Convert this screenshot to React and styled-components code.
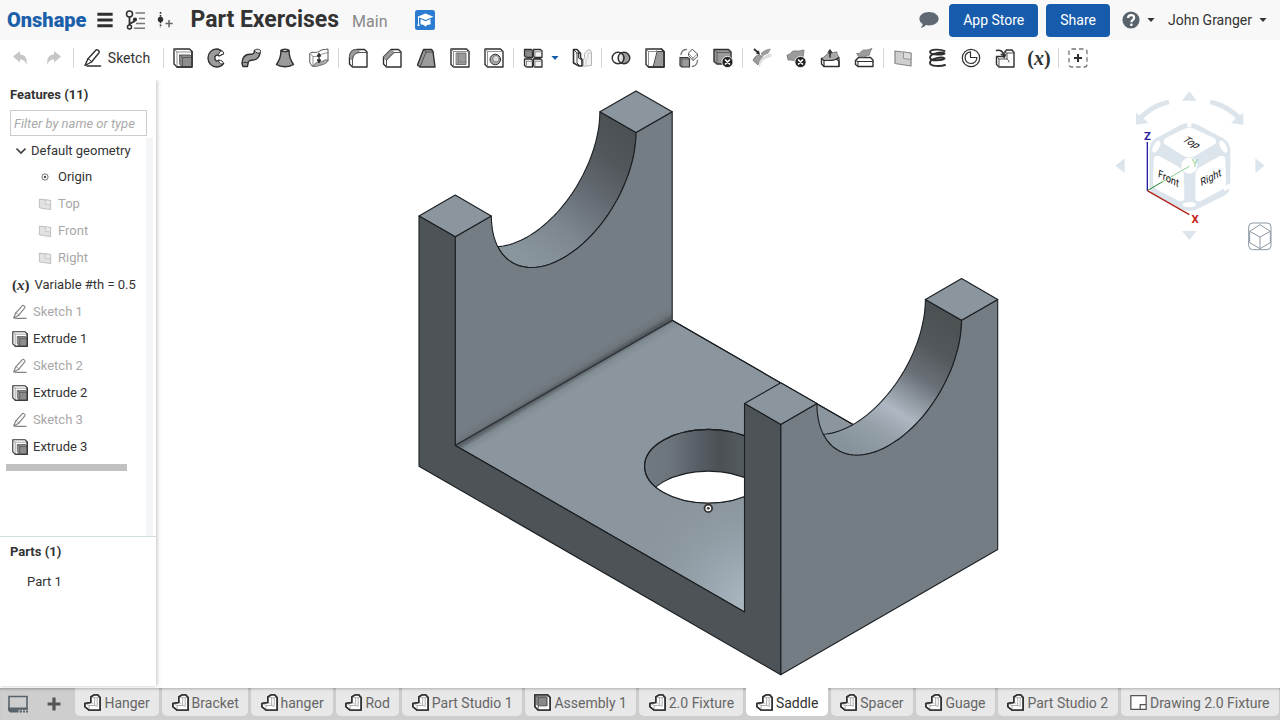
import React, { useState } from 'react';
import styled, { createGlobalStyle, css } from 'styled-components';

const GlobalStyle = createGlobalStyle`
  * {
    box-sizing: border-box;
  }

  body {
    margin: 0;
    font-family: Roboto, 'Liberation Sans', sans-serif;
    font-size: 14px;
    line-height: 18px;
    color: #333;
    background: #fff;
  }

  button,
  input {
    font: inherit;
    color: inherit;
  }

  button {
    border: none;
    background: none;
    padding: 0;
    cursor: pointer;
  }

  svg {
    display: block;
    flex: none;
  }
`;

/* ---------- icons ---------- */

const INK = '#2f2f2f';
const GREY = '#9b9b9b';

const outlined = {
  fill: 'none',
  stroke: INK,
  strokeWidth: 1.4,
  strokeLinejoin: 'round',
  strokeLinecap: 'round',
};

const thin = { stroke: '#777', strokeWidth: 0.8, fill: 'none' };

const ErrorBadge = () => (
  <g>
    <circle cx="14.5" cy="14" r="5.6" fill="#222" stroke="#fff" strokeWidth="0.8" />
    <path d="M12.5 12l4 4M16.5 12l-4 4" stroke="#fff" strokeWidth="1.7" strokeLinecap="round" />
  </g>
);

const icons = {
  undo: <path d="M3 8.500L10 3v3.500c5 0 7.500 3.500 6.500 10.500-1.200-4.200-3-5.500-6.500-5.500V14.500z" fill="#c6c6c6" />,
  redo: <path d="M17 8.500L10 3v3.500c-5 0-7.500 3.500-6.500 10.500 1.200-4.200 3-5.500 6.500-5.500V14.500z" fill="#c6c6c6" />,
  pencil: (
    <g {...outlined}>
      <path d="M2 17.500l2.800-6.500L13 2c1-1 4 1 3.200 2.500L8.500 14 2 17.500z" />
      <path d="M4.800 11c1.500.2 3 1.400 3.700 3" strokeWidth="1" />
      <path d="M4 18h13.500" strokeWidth="1.600" />
    </g>
  ),
  extrude: (
    <g {...outlined}>
      <path d="M1 1h15.500l2.500 2.500V19H4l-3-3z" fill="#fff" />
      <path d="M1 1l3 3v15M4 4h15" {...thin} />
      <path d="M7 7h10l2 2v10H9.500L7 16.500z" fill="#8d8d8d" stroke="#555" strokeWidth="1" />
      <path d="M7 7l2.500 2.500V19M9.500 9.500H19" stroke="#555" strokeWidth=".9" />
      <path d="M19 3.500V19H4" />
    </g>
  ),
  revolve: (
    <g {...outlined}>
      <path d="M16.500 5.500C14.500 2.500 12 1 9.500 1A8.500 9 0 0 0 9.500 19c3 0 5.500-1.300 7-3.500l-4.700-3.300c-2 1.500-4 .3-4-2.200s2.200-3.700 4-2.200z" fill={GREY} />
      <path d="M16.500 5.500c.6-2.700-2.500-3.300-3.700-1.300-1 1.800-2 2.600-1 3.600zM16.500 15.500c0-2-2.400-3.600-4.700-3.300-.4 2.800 2.200 4.800 4.700 3.300z" fill="#fff" strokeWidth="1" />
    </g>
  ),
  sweep: (
    <g {...outlined}>
      <path d="M13.500 2.500c-.3 3-1 3.800-4.500 3.800C4 6.300 1.200 9.500 1 15.500L2 18.500h4.500L7 15.500c.3-2.600 1-3.300 4-3.300 5.500 0 7.800-3.700 8.500-9.200z" fill={GREY} />
      <path d="M13.500 2.500c1-2 5-1.500 6 0s-.5 3-3 2.500-3-2.500-3-2.500z" fill="#ddd" strokeWidth="1" />
      <path d="M1.500 15c1.500-1 4-1 5.500 0" strokeWidth="1" />
    </g>
  ),
  loft: (
    <g {...outlined}>
      <path d="M6 2.500C6 9 4 13 1.500 16.500c4 3 13 3 17 0C16 13 14 9 14 2.500z" fill={GREY} />
      <path d="M6 2.500c1-1.700 7-1.700 8 0-1 1.500-7 1.500-8 0z" fill="#fff" />
    </g>
  ),
  thicken: (
    <g {...outlined} strokeWidth="1">
      <path d="M1 5.500c3-3 5 .5 9-2 3-2.500 5-1.500 9-2.500v12c-3 1-4 4-8 4s-5 2-8 1l-2-3z" fill="#fff" stroke="#555" />
      <path d="M4 18c2-3 4-4 7-4s4-3 8-2c-1 4-4 4-7 5s-5 2-8 1z" fill="#aaa" stroke="#777" />
      <path d="M1 5.500l3 3V18M4 8.500c3 1 6-1 8-2s4-1 7-2" {...thin} />
      <path d="M10 6v8M8.500 8L10 5.500 11.500 8zM8.500 12l1.500 2.500 1.500-2.500z" fill={INK} strokeWidth="1.300" />
    </g>
  ),
  fillet: (
    <g {...outlined}>
      <path d="M1.500 16V9C1.500 4 5 1.500 9 1.500h7.500L19 4v15H4.500z" fill="#fff" />
      <path d="M1.500 9C1.500 4 5 1.500 9 1.500l3 3c-4.500 0-7.500 3-7.500 7.500z" fill={GREY} stroke="#666" strokeWidth=".8" />
      <path d="M4.500 19v-7C4.500 7.500 7.500 4.500 12 4.500h7" strokeWidth="1" stroke="#555" />
    </g>
  ),
  chamfer: (
    <g {...outlined}>
      <path d="M1.500 16V9L9 1.500h7.500L19 4v15H4.500z" fill="#fff" />
      <path d="M1.500 9L9 1.500l3 3L4.500 12z" fill={GREY} stroke="#666" strokeWidth=".8" />
      <path d="M4.500 19v-7L12 4.500h7" strokeWidth="1" stroke="#555" />
    </g>
  ),
  draft: (
    <g {...outlined}>
      <path d="M1.500 17L7.500 1.500h8L17 3.500 19 19H4z" fill={GREY} />
      <path d="M4 19L10 4h7M7.500 1.500L10 4" strokeWidth=".9" stroke="#444" />
    </g>
  ),
  shell: (
    <g {...outlined}>
      <path d="M1 1h15.500L19 3.500V19H3.500L1 16.500z" fill="#fff" />
      <path d="M1 1l2.500 2.500V19M3.500 3.500H19" {...thin} />
      <path d="M6.500 5H16v11.500H6.500z" fill={GREY} stroke="#666" strokeWidth=".9" />
      <path d="M6.500 16.500L8.500 14H16M8.500 14V5" stroke="#777" strokeWidth=".7" />
    </g>
  ),
  hole: (
    <g {...outlined}>
      <path d="M1 1h15.500L19 3.500V19H3.500L1 16.500z" fill="#fff" />
      <path d="M1 1l2.500 2.500V19M3.500 3.500H19" {...thin} />
      <circle cx="11.300" cy="11.500" r="5.300" fill="#aaa" strokeWidth="1" />
      <circle cx="12" cy="10.800" r="3.300" fill="#ddd" stroke="#666" strokeWidth=".8" />
    </g>
  ),
  pattern: (
    <g {...outlined} strokeWidth="1.300">
      <path d="M1.500 1.500h7l1 1.500v6.500h-6l-2-1.500z" fill="#8d8d8d" />
      <path d="M10.500 1.500h7L19 3v6.500h-7.500l-1-1.500zM1.500 11h7l1 1.500V19h-6l-2-1.500zM10.500 11h7l1.500 1.500V19h-7.500l-1-1.500z" fill="#f2f2f2" />
      <path d="M3.500 3.800h6M12 3.800h7M3.500 13.300h6M12 13.300h7M3.500 3.800V9M12 3.800V9M3.500 13.300V18.500M12 13.300V18.500" {...thin} />
    </g>
  ),
  mirror: (
    <g {...outlined}>
      <path d="M11.500 18v-7l1-1V5.500L15.500 2H18l1.500 2v13z" fill="#f2f2f2" stroke="#b5b5b5" strokeWidth="1" />
      <path d="M14 17.500v-6l2-2V5h3" stroke="#c0c0c0" strokeWidth=".8" />
      <path d="M1.500 1.500H5l3.500 4v4l1.500 2v6.500H7L1.500 15z" fill="#fff" strokeWidth="1.600" />
      <path d="M1.500 1.500L5 5v10l3 3M5 5h3M6.500 5v5l3.500 2" strokeWidth=".9" />
    </g>
  ),
  boolean: (
    <g {...outlined}>
      <circle cx="13" cy="10" r="5.800" fill={GREY} />
      <circle cx="7" cy="10" r="5.800" fill="#fff" />
      <path d="M10 5a5.800 5.800 0 0 1 0 10 5.800 5.800 0 0 1 0-10z" fill="#e2e2e2" />
    </g>
  ),
  split: (
    <g {...outlined}>
      <path d="M1 1h15.500L19 3.500V19H3.500L1 16.500z" fill="#fff" />
      <path d="M12.500 3.500L19 3.500V19H8.500z" fill={GREY} strokeWidth=".9" />
      <path d="M1 1l2.500 2.500V19M3.500 3.500h9L10.500 1" {...thin} />
      <path d="M16.500 1L19 3.500V19H3.500" />
    </g>
  ),
  transform: (
    <g {...outlined} strokeWidth="1">
      <path d="M1 9.500h7.500l2 1.500v8H3l-2-1.500z" fill={GREY} stroke="#333" strokeWidth="1.200" />
      <path d="M1 9.500L3 11v8M3 11h7.500" stroke="#555" strokeWidth=".8" />
      <path d="M13.500 1.500L18.500 6v2.500l-4.500 4-4.500-5V5.500z" fill="#fff" stroke="#555" />
      <path d="M9.500 5.500l4.500 4.500 4.500-4M14 10v2.500" {...thin} />
      <path d="M2 6.500C2.500 3.500 4.500 1.500 7.500 1.500M18.500 12.500c-.3 3.300-2 5.500-5 6" stroke="#777" strokeWidth="1.300" />
    </g>
  ),
  deletePart: (
    <g {...outlined}>
      <path d="M1 1.500h14.500L18 4v12H4l-3-2.500z" fill={GREY} />
      <path d="M1 1.500L4 4.500V16M4 4.500h14" strokeWidth=".9" stroke="#555" />
      <ErrorBadge />
    </g>
  ),
  modifyFillet: (
    <g>
      <path d="M9 5.500c3-3 6-4.500 9.500-4.500l-2.500 4.500c-2 .3-4 1.300-5.500 3z" fill={GREY} stroke="#888" strokeWidth=".5" />
      <path d="M1 12.500c1-3 3-5 6-6l4 3c-3 2-4 4-5 7.500z" fill={GREY} stroke="#666" strokeWidth=".7" />
      <path d="M8 19.500c0-5.500 4-9.500 11.500-10.500V5.500C12.500 6.500 7.500 10.500 6.500 16.500z" fill="#dedede" />
      <path d="M2 1l4.500 4" stroke={INK} strokeWidth="1.700" />
      <path d="M8 6.500L3.800 5.500 6.800 2.200z" fill={INK} />
    </g>
  ),
  deleteFace: (
    <g>
      <path d="M1 7c4 0 4-5 9-4 4 .5 5-1 8-1l-1 8c-3 0-4 3-8 3-3-1-4-1-7-1z" fill={GREY} stroke="#777" strokeWidth=".8" />
      <ErrorBadge />
    </g>
  ),
  moveFace: (
    <g {...outlined}>
      <path d="M1.500 10.500h14L19 13v5.500H4L1.500 16z" fill="#fff" />
      <path d="M1.500 10.500C5 9.500 5.500 6 9 5.500s5-1.500 8-1.500c-.5 2 1 3 2 5.500-2 3-11 3-15 3z" fill="#aaa" stroke="#666" strokeWidth=".8" />
      <path d="M1.500 10.500L4 12.500v6h15V9.500M4 12.500h8c3 0 5-1.500 7-3" strokeWidth="1.200" />
      <path d="M10 9V3.500" strokeWidth="1.500" />
      <path d="M8 4.500L10 1.500l2 3z" fill={INK} strokeWidth=".8" />
    </g>
  ),
  replaceFace: (
    <g {...outlined}>
      <path d="M1.500 12.500L4.500 9.500h12L19 12v6.500H4L1.500 16.500z" fill="#fff" />
      <path d="M3 5.500c4 1 4-4 7.500-3.500 3 .5 5-1 7.500-1.500-2 3-2.500 5-2.500 6.500-3.500.5-5 2.500-8 2-2.500-.3-3.500 0-4.500-3.500z" fill={GREY} stroke="#777" strokeWidth=".8" />
      <path d="M1.500 12.500L4 13.500v5M4 13.500h15" strokeWidth="1" />
    </g>
  ),
  plane: (
    <g fill="#cfcfcf" stroke="#858585" strokeWidth="1.200" strokeLinejoin="round">
      <path d="M2 3l16 2v13L2 15.500z" />
      <path d="M10.500 4v6.500l7.500 1V5z" fill="#dcdcdc" strokeWidth=".8" />
    </g>
  ),
  helix: (
    <g {...outlined} strokeWidth="1.900">
      <path d="M17.500 3C14 1 3 1 3 4s13 3 14.500 1.500c-2-2-14.500-.5-14.500 4s13 2.500 14.500 1c-2-2-14.500-.5-14.500 4.500 0 3.500 11 3.500 15 2" />
    </g>
  ),
  curve: (
    <g {...outlined} strokeWidth="1.200">
      <circle cx="10" cy="10" r="8.700" />
      <path d="M9.500 3.800V9.500h6.500c-.4 3.600-3 6-6.200 6-3.300 0-5.700-2.500-5.700-5.700 0-3 2-5.500 5.400-6z" />
    </g>
  ),
  derive: (
    <g {...outlined}>
      <path d="M1.500 8.500h7.500V5L11.500 2H17l2 2.500V19H4l-2.500-2.500z" fill="#fff" />
      <path d="M1.500 8.500L4 11v8M4 11h8V5l-2.500-.5M12 5h7M12 11l2 2v1" strokeWidth="1" stroke="#555" />
      <path d="M1.500 2.500c4-1 6.500 1 7 4" strokeWidth="1.500" />
      <path d="M6 6l5 .5L9.500 10z" fill={INK} strokeWidth=".7" />
    </g>
  ),
  custom: (
    <g>
      <rect x="1" y="1" width="18" height="18" rx="2.500" fill="none" stroke="#777" strokeWidth="1.300" strokeDasharray="4.500 3" />
      <path d="M10 6v8M6 10h8" stroke={INK} strokeWidth="2" />
    </g>
  ),
  origin: (
    <g>
      <circle cx="10" cy="10" r="4.500" fill="none" stroke="#666" strokeWidth="1.300" />
      <circle cx="10" cy="10" r="1.800" fill="#555" />
    </g>
  ),
  partStudio: (
    <g {...outlined} strokeWidth="1.700">
      <path d="M1 11l7-1V3.500L12 1h4l3 3v15H6l-5-4z" fill="#fff" />
      <path d="M1 11l5 2.500h6.500V4.500L8 3.500M12.500 4.500L19 4M8 10l2.500 1M6 13.500V19M12.500 13.500l3 1V5" stroke="#999" strokeWidth=".9" />
      <path d="M1 11l7-1V3.500L12 1h4l3 3v15H6l-5-4z" />
    </g>
  ),
  assembly: (
    <g {...outlined} strokeWidth="1.600">
      <path d="M1 1h15l3 3v15H5l-4-4z" fill="#fff" />
      <path d="M1 1h15v13H5l-4-2z" fill="#888" stroke="none" />
      <path d="M1 1l4 3v15M5 4h10v10H5" strokeWidth="1" stroke="#555" />
      <path d="M1 1h15l3 3v15H5l-4-4z" />
    </g>
  ),
  drawing: (
    <g fill="#fff" stroke="#555" strokeWidth="1.500">
      <path d="M1 2h18v16H1z" />
      <path d="M12 18v-5.500h7" fill="none" />
    </g>
  ),
  menu: <path d="M1.500 3.500h17M1.500 10h17M1.500 16.500h17" stroke={INK} strokeWidth="3.300" />,
  versions: (
    <g fill="none" stroke={INK} strokeWidth="1.500">
      <circle cx="4.500" cy="4" r="3" />
      <circle cx="4.500" cy="17" r="2" />
      <circle cx="10" cy="9.500" r="1.300" fill={INK} />
      <path d="M4.500 7v8c0-3 5-1.500 5.500-5" strokeWidth="1.800" />
      <path d="M10.500 3H20M14 8.500h6M11 13.500h9M9 18.300h11" stroke="#777" />
    </g>
  ),
  insert: (
    <g stroke={INK}>
      <path d="M5 1v18" strokeWidth="1.700" strokeDasharray="2 1.500" />
      <circle cx="5" cy="9.500" r="3" fill={INK} stroke="none" />
      <path d="M14.500 10v8M10.500 14h8" stroke="#666" strokeWidth="1.700" />
    </g>
  ),
  education: (
    <g>
      <rect width="20" height="20" rx="2.500" fill="#2b7bd0" />
      <path d="M10.500 3.500l8 3.200-8 3.300-8-3.300z" fill="#fff" />
      <path d="M5.500 9l5 2.200L15.500 9v3.500c.5 1.500.5 2-1 2s-3 .8-4 2.300c-1-1.500-2.500-2.300-4-2.300-1 0-1-.5-1-2z" fill="#fff" />
      <path d="M3.500 7v6" stroke="#fff" strokeWidth="1" />
      <path d="M3.500 11.500l1.200 4.500H2.300z" fill="#fff" />
    </g>
  ),
  comment: <path d="M10 2c5.400 0 9.600 2.900 9.600 6.700s-4.200 6.700-9.600 6.700c-1 0-2-.1-2.900-.3C5.500 16.600 3.700 17.800 1.700 18c1-1 1.700-2.300 1.900-3.900C1.600 12.900.4 10.900.4 8.700.4 4.900 4.600 2 10 2z" fill="#5f6a74" />,
  help: (
    <g>
      <circle cx="10" cy="10" r="9.500" fill="#59636c" />
      <path d="M6.800 7.800c0-4.200 6.700-4 6.700-.2 0 2.400-3 2.400-3 4.900" fill="none" stroke="#fff" strokeWidth="2.500" />
      <circle cx="10.400" cy="15.300" r="1.500" fill="#fff" />
    </g>
  ),
  caret: <path d="M1 5h18l-9 10z" fill="currentColor" />,
  chevron: <path d="M1 5l9 9 9-9" fill="none" stroke="#444" strokeWidth="3.500" />,
  monitor: (
    <g>
      <path d="M1 2.500h18V15H1z" fill="none" stroke="#59636c" strokeWidth="1.600" />
      <path d="M0 13.500h20v2H10.500v3H2L0 16.500z" fill="#59636c" />
      <path d="M11.500 16.500H14v2h-2.500zM15 16.500h2v2h-2zM18 16.500h2v2h-2z" fill="#59636c" />
    </g>
  ),
  plus: <path d="M10 2v16M2 10h16" stroke="#555" strokeWidth="4" />,
};

const Icon = ({ name, size = 20 }) => (
  <svg width={size} height={size} viewBox="0 0 20 20" aria-hidden="true">
    {icons[name]}
  </svg>
);

const VariableText = styled.span`
  font-family: 'Liberation Serif', serif;
  font-size: ${({ $large }) => ($large ? 20 : 15)}px;
  font-weight: 700;
  white-space: nowrap;
`;

const VariableMark = ({ large }) => (
  <VariableText $large={large}>
    (<em>x</em>)
  </VariableText>
);

/* ---------- header ---------- */

const Page = styled.div`
  display: flex;
  flex-direction: column;
  height: 100vh;
  overflow: hidden;
`;

const Header = styled.header`
  display: flex;
  align-items: center;
  flex: none;
  height: 40px;
  padding: 0 13px 0 7px;
  background: #f8f8f8;
`;

const Logo = styled.a`
  margin-right: 10px;
  font-size: 20px;
  line-height: 24px;
  font-weight: 900;
  color: #1b5faa;
  text-decoration: none;
`;

const HeaderTools = styled.div`
  display: flex;
  align-items: center;
  gap: 11px;
  margin-right: 16px;
`;

const Title = styled.h1`
  margin: 0;
  font-size: 23px;
  line-height: 28px;
  font-weight: 700;
  white-space: nowrap;
`;

const Workspace = styled.span`
  margin: 4px 27px 0 13px;
  font-size: 16px;
  color: #888;
`;

const Account = styled.div`
  display: flex;
  align-items: center;
  gap: 8px;
  margin-left: auto;
`;

const IconButton = styled.button`
  display: flex;
  align-items: center;
  gap: 7px;
  white-space: nowrap;
`;

const CommentButton = styled(IconButton)`
  margin-right: 2px;
`;

const UserButton = styled(IconButton)`
  margin-left: 5px;
`;

const HelpButton = styled(IconButton)`
  margin-left: 4px;
`;

const PrimaryButton = styled.button`
  height: 33px;
  padding: 0 14px;
  border-radius: 4px;
  background: #175cac;
  color: #fff;
  white-space: nowrap;
`;

/* ---------- toolbar ---------- */

const Toolbar = styled.div`
  display: flex;
  align-items: center;
  flex: none;
  height: 40px;
  padding: 0 3px 4px;
`;

const Tool = styled.button`
  display: flex;
  align-items: center;
  justify-content: center;
  flex: none;
  width: 34px;
  height: 34px;
`;

const SketchTool = styled(Tool)`
  width: 85px;
  padding-right: 4px;
  gap: 5px;
`;

const PatternCaret = styled(Tool)`
  width: 15px;
  padding-right: 5px;
  color: #175cac;
`;

const Separator = styled.span`
  flex: none;
  width: 1px;
  height: 20px;
  margin: 0 2px;
  background: #d6d6d6;
`;

/* ---------- side panel ---------- */

const Main = styled.main`
  display: flex;
  flex: 1;
  min-height: 0;
`;

const Panel = styled.aside`
  display: flex;
  flex-direction: column;
  flex: none;
  width: 156px;
  margin-bottom: 2px;
  background: #fff;
  font-size: 13px;
  box-shadow: 1px 0 4px rgba(0, 0, 0, 0.25);
  clip-path: inset(0 -6px -2px 0);
  z-index: 1;
`;

const PanelTitle = styled.h2`
  margin: 0;
  padding: 6px 10px 4px;
  font-size: 13px;
  line-height: 18px;
  font-weight: 700;
`;

const Filter = styled.input`
  height: 26px;
  margin: 2px 9px 2px 10px;
  padding: 0 3px;
  border: 1px solid #ccc;
  border-radius: 0;
  min-width: 0;
  background: #fff;

  &::placeholder {
    color: #aaa;
    font-style: italic;
    opacity: 1;
  }
`;

const TreeArea = styled.div`
  display: flex;
  flex: 1;
  min-height: 0;
  border-bottom: 1px solid #cfdfdf;
`;

const Track = styled.div`
  flex: none;
  width: 7px;
  margin: 0 3px 0 0;
  background: #f3f5f7;
`;

const Tree = styled.ul`
  flex: 1;
  min-width: 0;
  margin: 0;
  padding: 0;
  list-style: none;
`;

const Row = styled.li`
  display: flex;
  align-items: center;
  height: 27px;
  padding-left: ${({ $nested }) => ($nested ? 38 : 12)}px;
  gap: ${({ $nested }) => ($nested ? 6 : 5)}px;
  white-space: nowrap;
  ${({ $muted }) =>
    $muted &&
    css`
      color: #a8a8a8;

      svg {
        opacity: 0.6;
      }
    `}
`;

const Group = styled(Row)`
  height: 25px;
  padding-left: 16px;
`;

const RollbackBar = styled.li`
  width: 121px;
  height: 7px;
  margin: 4px 0 0 6px;
  background: #c1c1c1;
`;

const Parts = styled.section`
  height: 149px;
`;

const PartRow = styled.div`
  padding: 8px 27px;
`;

/* ---------- viewport ---------- */

const Viewport = styled.section`
  position: relative;
  flex: 1;
  min-width: 0;
  background: #fff;
`;

const ModelSvg = styled.svg`
  width: 100%;
  height: 100%;
`;

const ViewCubeBox = styled.div`
  position: absolute;
  top: 0;
  right: 0;
`;

// Isometric projection, one unit is the wall thickness
const iso = (x, y, z) => [419 + (x + y) * 36.17, 466.2 + (x - y) * 20.85 - z * 41.7];

const toPath = (points) => points.map((p) => `${p[0].toFixed(1)} ${p[1].toFixed(1)}`).join('L');

const face = (...corners) => `M${toPath(corners.map((c) => iso(...c)))}Z`;

// Points of the saddle cut on the wall plane x, angles in degrees
const saddle = (x, from, to) => {
  const steps = 48;
  return Array.from({ length: steps + 1 }, (_, i) => {
    const a = ((from + ((to - from) * i) / steps) * Math.PI) / 180;
    return iso(x, 3 + 2 * Math.cos(a), 6 - 2 * Math.sin(a));
  });
};

const DARK = '#4d5356';
const SIDE = '#757d84';
const TOP = '#8a959d';

const Wall = ({ x, base, fill }) => (
  <g>
    <path d={`M${toPath([...saddle(x - 1, 114.3, 0), ...saddle(x, 0, 155.7)])}Z`} fill={fill} />
    <path
      d={`M${toPath([iso(x, 0, base), iso(x, 0, 6), ...saddle(x, 180, 0), iso(x, 6, 6), iso(x, 6, base)])}Z`}
      fill={SIDE}
    />
    <path d={face([x - 1, 0, 6], [x, 0, 6], [x, 1, 6], [x - 1, 1, 6])} fill={TOP} />
    <path d={face([x - 1, 5, 6], [x, 5, 6], [x, 6, 6], [x - 1, 6, 6])} fill={TOP} />
  </g>
);

const Model = () => {
  const [hx, hy] = iso(5, 3, 1);
  return (
    <ModelSvg viewBox="156 80 1124 608" role="img" aria-label="Saddle part">
      <defs>
        <linearGradient id="cutLeft" gradientUnits="userSpaceOnUse" x1="625" y1="130" x2="525" y2="260">
          <stop offset="0" stopColor="#4c5154" />
          <stop offset="0.2" stopColor="#51575b" />
          <stop offset="0.42" stopColor="#636970" />
          <stop offset="0.7" stopColor="#7c868e" />
          <stop offset="1" stopColor="#8a969e" />
        </linearGradient>
        <linearGradient id="cutRight" gradientUnits="userSpaceOnUse" x1="945" y1="318" x2="860" y2="455">
          <stop offset="0" stopColor="#4c5154" />
          <stop offset="0.2" stopColor="#53585c" />
          <stop offset="0.4" stopColor="#6b7178" />
          <stop offset="0.65" stopColor="#aeb8c2" />
          <stop offset="0.8" stopColor="#95a0a9" />
          <stop offset="1" stopColor="#87939b" />
        </linearGradient>
        <linearGradient id="bore" gradientUnits="userSpaceOnUse" x1="645" y1="0" x2="745" y2="0">
          <stop offset="0" stopColor="#727a81" />
          <stop offset="0.25" stopColor="#6d757c" />
          <stop offset="0.5" stopColor="#5a6068" />
          <stop offset="0.75" stopColor="#4b5054" />
          <stop offset="1" stopColor="#555c60" />
        </linearGradient>
        <radialGradient id="glow" gradientUnits="userSpaceOnUse" cx="755" cy="605" r="130">
          <stop offset="0" stopColor="#b0bcc6" />
          <stop offset="0.5" stopColor="#9aa6af" stopOpacity="0.7" />
          <stop offset="1" stopColor={TOP} stopOpacity="0" />
        </radialGradient>
        <linearGradient id="crease" gradientUnits="userSpaceOnUse" x1="558" y1="373" x2="570" y2="393">
          <stop offset="0" stopColor="#3e4448" stopOpacity="0" />
          <stop offset="0.3" stopColor="#3e4448" stopOpacity="0.12" />
          <stop offset="0.5" stopColor="#3e4448" stopOpacity="0.65" />
          <stop offset="0.7" stopColor="#3e4448" stopOpacity="0.12" />
          <stop offset="1" stopColor="#3e4448" stopOpacity="0" />
        </linearGradient>
        <clipPath id="boreClip">
          <ellipse cx={hx} cy={hy} rx="63.8" ry="36.8" />
        </clipPath>
      </defs>

      <g stroke="#1b1f22" strokeWidth="1.1" strokeLinejoin="round">
        <path d={face([1, 0, 1], [1, 6, 1], [9, 6, 1], [9, 0, 1])} fill={TOP} />
        <path d={face([1, 0, 1], [1, 6, 1], [9, 6, 1], [9, 0, 1])} fill="url(#glow)" />
        <Wall x={1} base={1} fill="url(#cutLeft)" />
        <path d="M456 431L672 307V321L684 328L468 452L456 445Z" fill="url(#crease)" stroke="none" />

        <ellipse cx={hx} cy={hy} rx="63.8" ry="36.8" fill="url(#bore)" />
        <g clipPath="url(#boreClip)">
          <ellipse cx={hx} cy={hy + 41.7} rx="63.8" ry="36.8" fill="#fff" />
        </g>
        <ellipse cx={hx} cy={hy} rx="63.8" ry="36.8" fill="none" />

        <Wall x={10} base={0} fill="url(#cutRight)" />
        <path
          d={face([0, 0, 0], [0, 0, 6], [1, 0, 6], [1, 0, 1], [9, 0, 1], [9, 0, 6], [10, 0, 6], [10, 0, 0])}
          fill={DARK}
        />
      </g>

      <circle cx="708.3" cy="508.3" r="3.8" fill="#fff" stroke="#333" strokeWidth="1.8" />
      <circle cx="708.3" cy="508.3" r="1.4" fill="#333" />
    </ModelSvg>
  );
};

const ViewCube = () => (
  <ViewCubeBox>
    <svg width="180" height="180" viewBox="0 0 540 540" role="img" aria-label="View cube">
      <g fill="#dde5ec">
        <path d="M268 34l22 28h-44zM268 480l22-27h-44zM46 257l28-22v44zM494 257l-28-22v44z" />
        <path d="M108 134v-36l10 8C142 82 172 66 205 59l4 14c-31 7-56 22-78 42l14 14z" />
        <path d="M430 134v-36l-10 8C396 82 366 66 333 59l-4 14c31 7 56 22 78 42l-14 14z" />
        <path
          d="M240 136q28-14 56 0l72 38q23 13 23 38v102q0 24-22 35l-76 38q-25 12-50 0l-76-38q-19-11-19-35V212q0-25 20-37z"
        />
      </g>
      <g fill="#fff" stroke="#fff" strokeWidth="22" strokeLinejoin="round">
        <path d="M202 184l55-27q11-5 22 0l58 27-57 34q-12 6-24 0z" />
        <path d="M172 238l58 32q10 6 11 17l1 66-64-33q-8-5-8-14z" />
        <path d="M365 238l-58 32q-10 6-10 17v66l62-33q8-5 8-14z" />
      </g>
      <g fill="#fff">
        <circle cx="268" cy="257" r="24" />
        <ellipse cx="268" cy="374" rx="20" ry="8" />
        <ellipse cx="169" cy="200" rx="9" ry="20" transform="rotate(28 169 200)" />
        <ellipse cx="370" cy="200" rx="9" ry="20" transform="rotate(-28 370 200)" />
        <path d="M262 126h12v16h-12zM368 320l26-12 4 12-24 14z" />
      </g>
      <path d="M142 332l46-27" stroke="#2b8a32" strokeWidth="3" />
      <path d="M188 305l80-46" stroke="#8fce95" strokeWidth="3" />
      <path d="M142 332V186" stroke="#2a1f9e" strokeWidth="4" />
      <path d="M142 332l126 72" stroke="#b3251c" strokeWidth="4" />
      <g fontFamily="Roboto, sans-serif" textAnchor="middle">
        <g fontSize="34" fontWeight="700">
          <text x="142" y="179" fill="#2a1f9e">Z</text>
          <text x="285" y="428" fill="#c4201b">X</text>
          <text x="285" y="260" fill="#98d59e" fontWeight="400">Y</text>
        </g>
        <g fontSize="30" fill="#111">
          <text transform="translate(266 194) rotate(28) skewX(-28)">Top</text>
          <text transform="translate(204 306) rotate(27) skewX(20)">Front</text>
          <text transform="translate(334 303) rotate(-27) skewX(-20)">Right</text>
        </g>
      </g>
      <g fill="none" stroke="#8d99a5" strokeWidth="3" strokeLinejoin="round">
        <rect x="446" y="429" width="67" height="80" rx="12" />
        <path d="M480 434l31 20v34l-31 18-31-18v-34zM449 454l31 17 31-17M480 471v35" />
      </g>
    </svg>
  </ViewCubeBox>
);

/* ---------- tab bar ---------- */

const TabBar = styled.nav`
  display: flex;
  flex: none;
  height: 32px;
  padding: 0 1px 4px 0;
  background: #cecece;
  box-shadow: inset 0 3px 3px -2px rgba(0, 0, 0, 0.3);
`;

const TabTools = styled.div`
  display: flex;
  align-items: center;
  flex: none;
  gap: 18px;
  width: 75px;
  padding: 4px 0 0 8px;
`;

const Tabs = styled.div`
  display: flex;
  flex: 1;
  gap: 3px;
  min-width: 0;
`;

const Tab = styled.button`
  display: flex;
  align-items: center;
  justify-content: center;
  flex: 1 0 auto;
  gap: 3px;
  padding: 1px 8px 0;
  border-radius: 0 0 5px 5px;
  background: ${({ $active }) => ($active ? '#fff' : '#e8e8e8')};
  color: ${({ $active }) => ($active ? '#333' : '#666')};
  box-shadow: ${({ $active }) => ($active ? 'none' : 'inset 0 3px 3px -2px rgba(0, 0, 0, 0.25)')};
  white-space: nowrap;
`;

const toolGroups = [
  ['extrude', 'revolve', 'sweep', 'loft', 'thicken'],
  ['fillet', 'chamfer', 'draft', 'shell', 'hole'],
  ['pattern', 'mirror'],
  ['boolean', 'split', 'transform', 'deletePart'],
  ['modifyFillet', 'deleteFace', 'moveFace', 'replaceFace'],
  ['plane', 'helix', 'curve', 'derive', 'variable'],
  ['custom'],
];

const features = [
  { label: 'Variable #th = 0.5', icon: 'variable' },
  { label: 'Sketch 1', icon: 'pencil', muted: true },
  { label: 'Extrude 1', icon: 'extrude' },
  { label: 'Sketch 2', icon: 'pencil', muted: true },
  { label: 'Extrude 2', icon: 'extrude' },
  { label: 'Sketch 3', icon: 'pencil', muted: true },
  { label: 'Extrude 3', icon: 'extrude' },
];

const tabs = [
  { label: 'Hanger', icon: 'partStudio' },
  { label: 'Bracket', icon: 'partStudio' },
  { label: 'hanger', icon: 'partStudio' },
  { label: 'Rod', icon: 'partStudio' },
  { label: 'Part Studio 1', icon: 'partStudio' },
  { label: 'Assembly 1', icon: 'assembly' },
  { label: '2.0 Fixture', icon: 'partStudio' },
  { label: 'Saddle', icon: 'partStudio' },
  { label: 'Spacer', icon: 'partStudio' },
  { label: 'Guage', icon: 'partStudio' },
  { label: 'Part Studio 2', icon: 'partStudio' },
  { label: 'Drawing 2.0 Fixture', icon: 'drawing' },
];

const FeatureList = () => (
  <Panel>
    <PanelTitle>Features (11)</PanelTitle>
    <Filter type="text" placeholder="Filter by name or type" aria-label="Filter features" />
    <TreeArea>
      <Tree>
        <Group>
          <Icon name="chevron" size={10} />
          Default geometry
        </Group>
        <Row $nested>
          <Icon name="origin" size={14} />
          Origin
        </Row>
        {['Top', 'Front', 'Right'].map((plane) => (
          <Row key={plane} $nested $muted>
            <Icon name="plane" size={14} />
            {plane}
          </Row>
        ))}
        {features.map(({ label, icon, muted }) => (
          <Row key={label} $muted={muted}>
            {icon === 'variable' ? <VariableMark /> : <Icon name={icon} size={16} />}
            {label}
          </Row>
        ))}
        <RollbackBar />
      </Tree>
      <Track />
    </TreeArea>
    <Parts>
      <PanelTitle>Parts (1)</PanelTitle>
      <PartRow>Part 1</PartRow>
    </Parts>
  </Panel>
);

const App = () => {
  const [activeTab, setActiveTab] = useState('Saddle');

  return (
    <Page>
      <GlobalStyle />
      <Header>
        <Logo href="#">Onshape</Logo>
        <HeaderTools>
          <IconButton aria-label="Menu">
            <Icon name="menu" size={18} />
          </IconButton>
          <IconButton aria-label="Versions">
            <Icon name="versions" />
          </IconButton>
          <IconButton aria-label="Insert">
            <Icon name="insert" size={18} />
          </IconButton>
        </HeaderTools>
        <Title>Part Exercises</Title>
        <Workspace>Main</Workspace>
        <IconButton aria-label="Learning center">
          <Icon name="education" />
        </IconButton>
        <Account>
          <CommentButton aria-label="Comments">
            <Icon name="comment" />
          </CommentButton>
          <PrimaryButton>App Store</PrimaryButton>
          <PrimaryButton>Share</PrimaryButton>
          <HelpButton aria-label="Help">
            <Icon name="help" size={18} />
            <Icon name="caret" size={8} />
          </HelpButton>
          <UserButton>
            John Granger
            <Icon name="caret" size={8} />
          </UserButton>
        </Account>
      </Header>

      <Toolbar>
        <Tool aria-label="Undo">
          <Icon name="undo" />
        </Tool>
        <Tool aria-label="Redo">
          <Icon name="redo" />
        </Tool>
        <Separator />
        <SketchTool>
          <Icon name="pencil" />
          Sketch
        </SketchTool>
        {toolGroups.map((group) => (
          <React.Fragment key={group[0]}>
            <Separator />
            {group.map((name) => (
              <React.Fragment key={name}>
                <Tool aria-label={name}>
                  {name === 'variable' ? <VariableMark large /> : <Icon name={name} />}
                </Tool>
                {name === 'pattern' && (
                  <PatternCaret aria-label="More patterns">
                    <Icon name="caret" size={8} />
                  </PatternCaret>
                )}
              </React.Fragment>
            ))}
          </React.Fragment>
        ))}
      </Toolbar>

      <Main>
        <FeatureList />
        <Viewport>
          <Model />
          <ViewCube />
        </Viewport>
      </Main>

      <TabBar>
        <TabTools>
          <IconButton aria-label="Tab manager">
            <Icon name="monitor" />
          </IconButton>
          <IconButton aria-label="New tab">
            <Icon name="plus" size={16} />
          </IconButton>
        </TabTools>
        <Tabs role="tablist">
          {tabs.map(({ label, icon }) => (
            <Tab
              key={label}
              role="tab"
              aria-selected={label === activeTab}
              $active={label === activeTab}
              onClick={() => setActiveTab(label)}
            >
              <Icon name={icon} size={17} />
              {label}
            </Tab>
          ))}
        </Tabs>
      </TabBar>
    </Page>
  );
};

export default App;
